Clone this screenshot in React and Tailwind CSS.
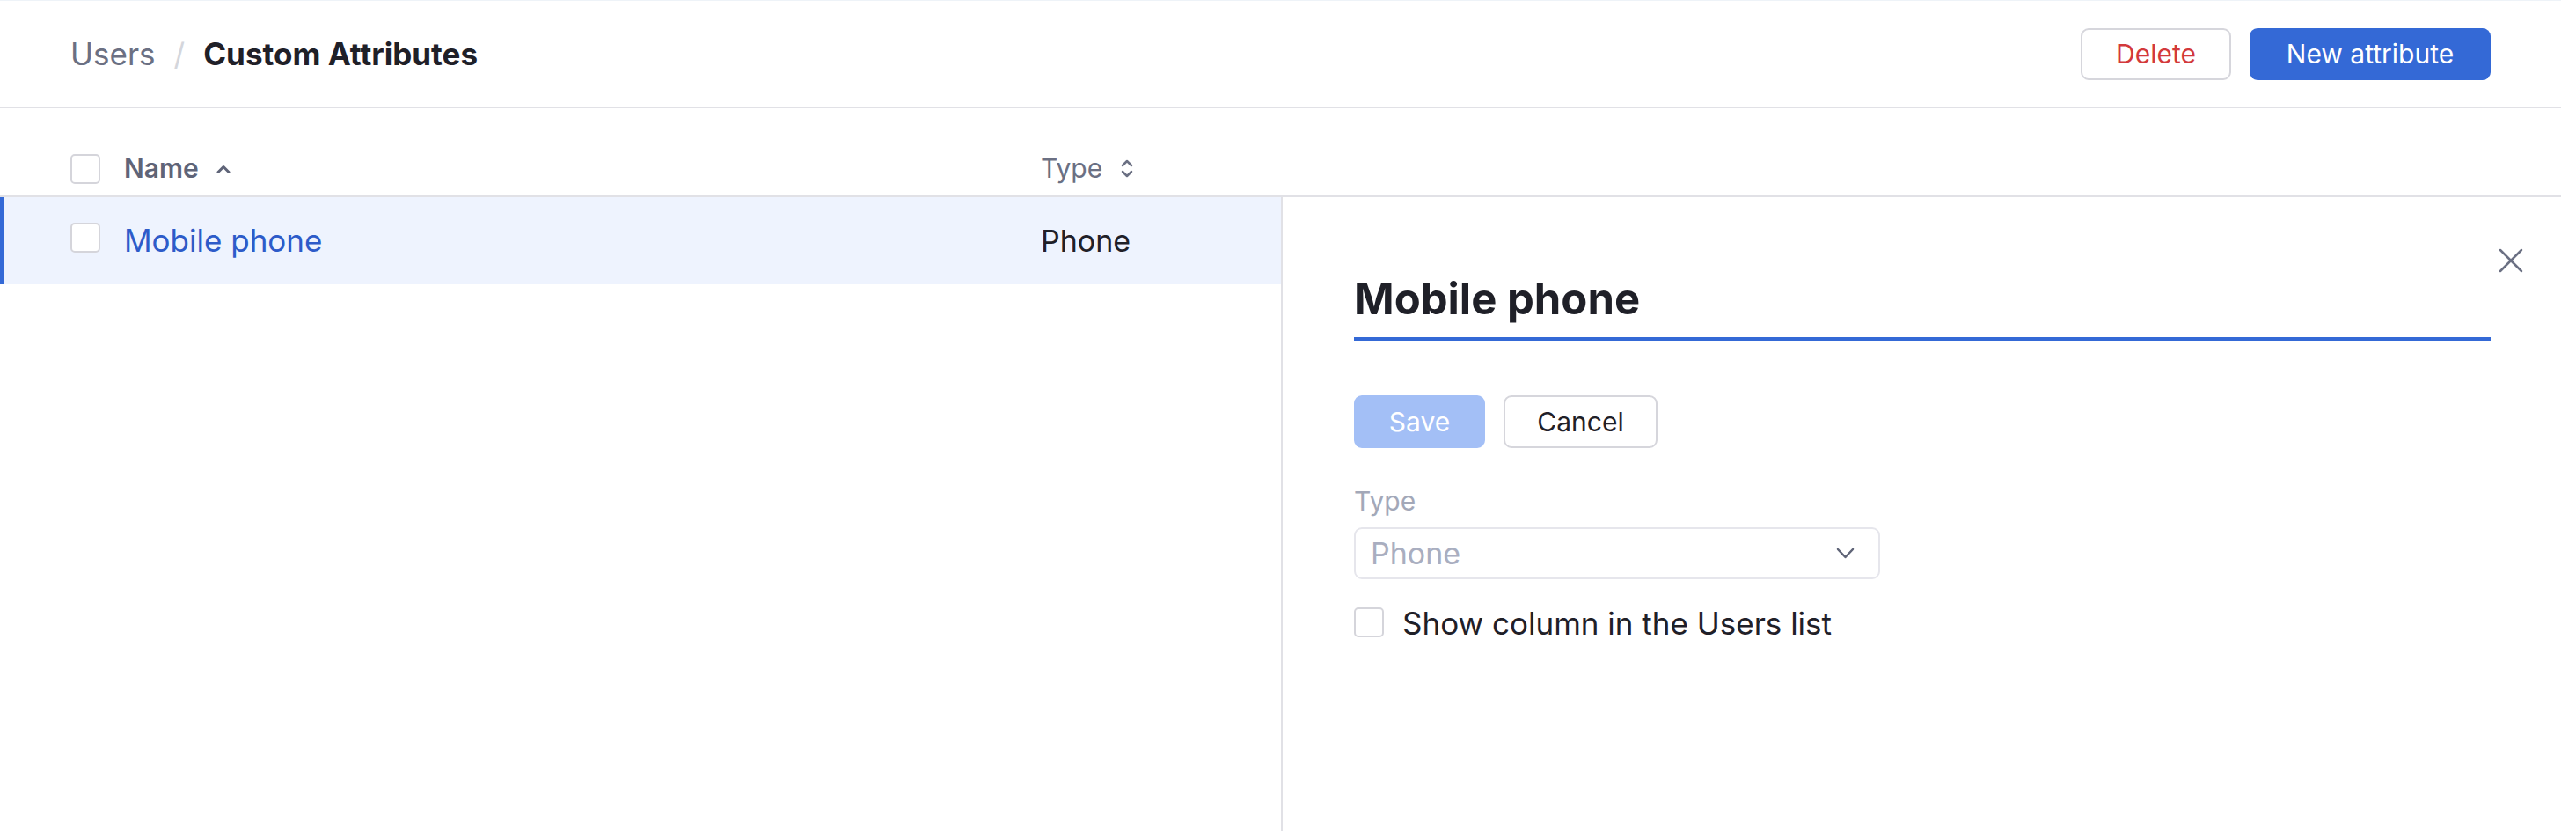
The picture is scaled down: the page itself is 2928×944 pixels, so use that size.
import React from "react";

function Checkbox({ className = "" }) {
	return (
		<span
			className={`block w-[34px] h-[34px] shrink-0 rounded-[5px] border-2 border-[#d5d5db] bg-white ${className}`}
		/>
	);
}

function SortUp() {
	return (
		<svg width="16" height="10" viewBox="0 0 16 10" fill="none" className="ml-[20px]">
			<polyline points="2,8.5 8,2.5 14,8.5" stroke="#5f6478" strokeWidth="3" strokeLinecap="round" strokeLinejoin="round" />
		</svg>
	);
}

function SortBoth() {
	return (
		<svg width="14" height="21" viewBox="0 0 14 21" fill="none" className="ml-[21px]">
			<polyline points="2,7 7,2 12,7" stroke="#6b7083" strokeWidth="2.5" strokeLinecap="round" strokeLinejoin="round" />
			<polyline points="2,14 7,19 12,14" stroke="#6b7083" strokeWidth="2.5" strokeLinecap="round" strokeLinejoin="round" />
		</svg>
	);
}

export default function App() {
	return (
		<div className="w-[2928px] h-[944px] bg-white flex font-['Inter','Liberation_Sans',sans-serif]">
			<div className="w-[2911px] flex flex-col">
				{/* top bar */}
				<header className="h-[123px] shrink-0 border-t border-t-[#eef3f8] border-b-2 border-b-[#e1e1e6] px-[80px] flex items-center justify-between">
					<div className="flex items-center text-[35px] leading-[40px]">
						<span className="text-[#6b7083]">Users</span>
						<span className="mx-[21px] text-[#d4d6dc]">/</span>
						<span className="font-bold text-[#1f2028]">Custom Attributes</span>
					</div>
					<div className="flex items-center gap-[21px]">
						<button className="w-[171px] h-[59px] rounded-[9px] border-2 border-[#d6d6dc] bg-white text-[30px] text-[#d3393b]">
							Delete
						</button>
						<button className="w-[274px] h-[59px] rounded-[9px] bg-[#3469d6] text-[30px] text-white">
							New attribute
						</button>
					</div>
				</header>

				{/* table head */}
				<div className="h-[101px] shrink-0 border-b-2 border-[#e1e1e6] flex items-end pb-[8px] pl-[80px]">
					<div className="w-[1103px] flex items-center">
						<Checkbox />
						<span className="ml-[27px] text-[30px] font-semibold text-[#5f6478]">Name</span>
						<SortUp />
					</div>
					<div className="flex items-center">
						<span className="text-[30px] text-[#6b7083]">Type</span>
						<SortBoth />
					</div>
				</div>

				<div className="flex-1 flex">
					{/* list */}
					<div className="w-[1458px] shrink-0 border-r-2 border-[#e1e1e6]">
						<div className="h-[99px] flex items-center bg-[#eef3fe] border-l-[5px] border-[#3469d6] pl-[75px]">
							<div className="w-[1103px] flex items-center">
								<Checkbox className="mb-[7px]" />
								<span className="ml-[27px] text-[35px] text-[#2d5bc9]">Mobile phone</span>
							</div>
							<span className="text-[34px] text-[#1f2028]">Phone</span>
						</div>
					</div>

					{/* detail panel */}
					<div className="relative flex-1 pt-[86px] pl-[81px] pr-[80px]">
						<button className="absolute top-[58px] right-[43px] w-[28px] h-[28px]">
							<svg width="28" height="28" viewBox="0 0 28 28" fill="none">
								<path d="M2 2L26 26M26 2L2 26" stroke="#6b7083" strokeWidth="2.5" strokeLinecap="round" />
							</svg>
						</button>

						<div className="border-b-4 border-[#3469d6] pb-[13px] text-[49px] leading-[60px] font-bold text-[#1f2028]">
							Mobile phone
						</div>

						<div className="mt-[62px] flex gap-[21px]">
							<button className="w-[149px] h-[60px] rounded-[9px] bg-[#a3bff6] text-[30px] text-white">
								Save
							</button>
							<button className="w-[175px] h-[60px] rounded-[9px] border-2 border-[#d6d6dc] bg-white text-[30px] text-[#1f2028]">
								Cancel
							</button>
						</div>

						<div className="mt-[42px] text-[30px] leading-[36px] text-[#a3a8b8]">Type</div>
						<div className="mt-[12px] w-[598px] h-[59px] rounded-[9px] border-2 border-[#e6e6ec] pl-[17px] pr-[27px] flex items-center justify-between">
							<span className="text-[34px] text-[#a9aec0]">Phone</span>
							<svg width="21" height="13" viewBox="0 0 21 13" fill="none">
								<polyline points="2,2 10.5,11 19,2" stroke="#5f6477" strokeWidth="2.5" strokeLinecap="round" strokeLinejoin="round" />
							</svg>
						</div>

						<label className="mt-[24px] flex items-center">
							<Checkbox className="mb-[3px]" />
							<span className="ml-[21px] text-[35px] text-[#1f2028]">Show column in the Users list</span>
						</label>
					</div>
				</div>
			</div>
		</div>
	);
}
